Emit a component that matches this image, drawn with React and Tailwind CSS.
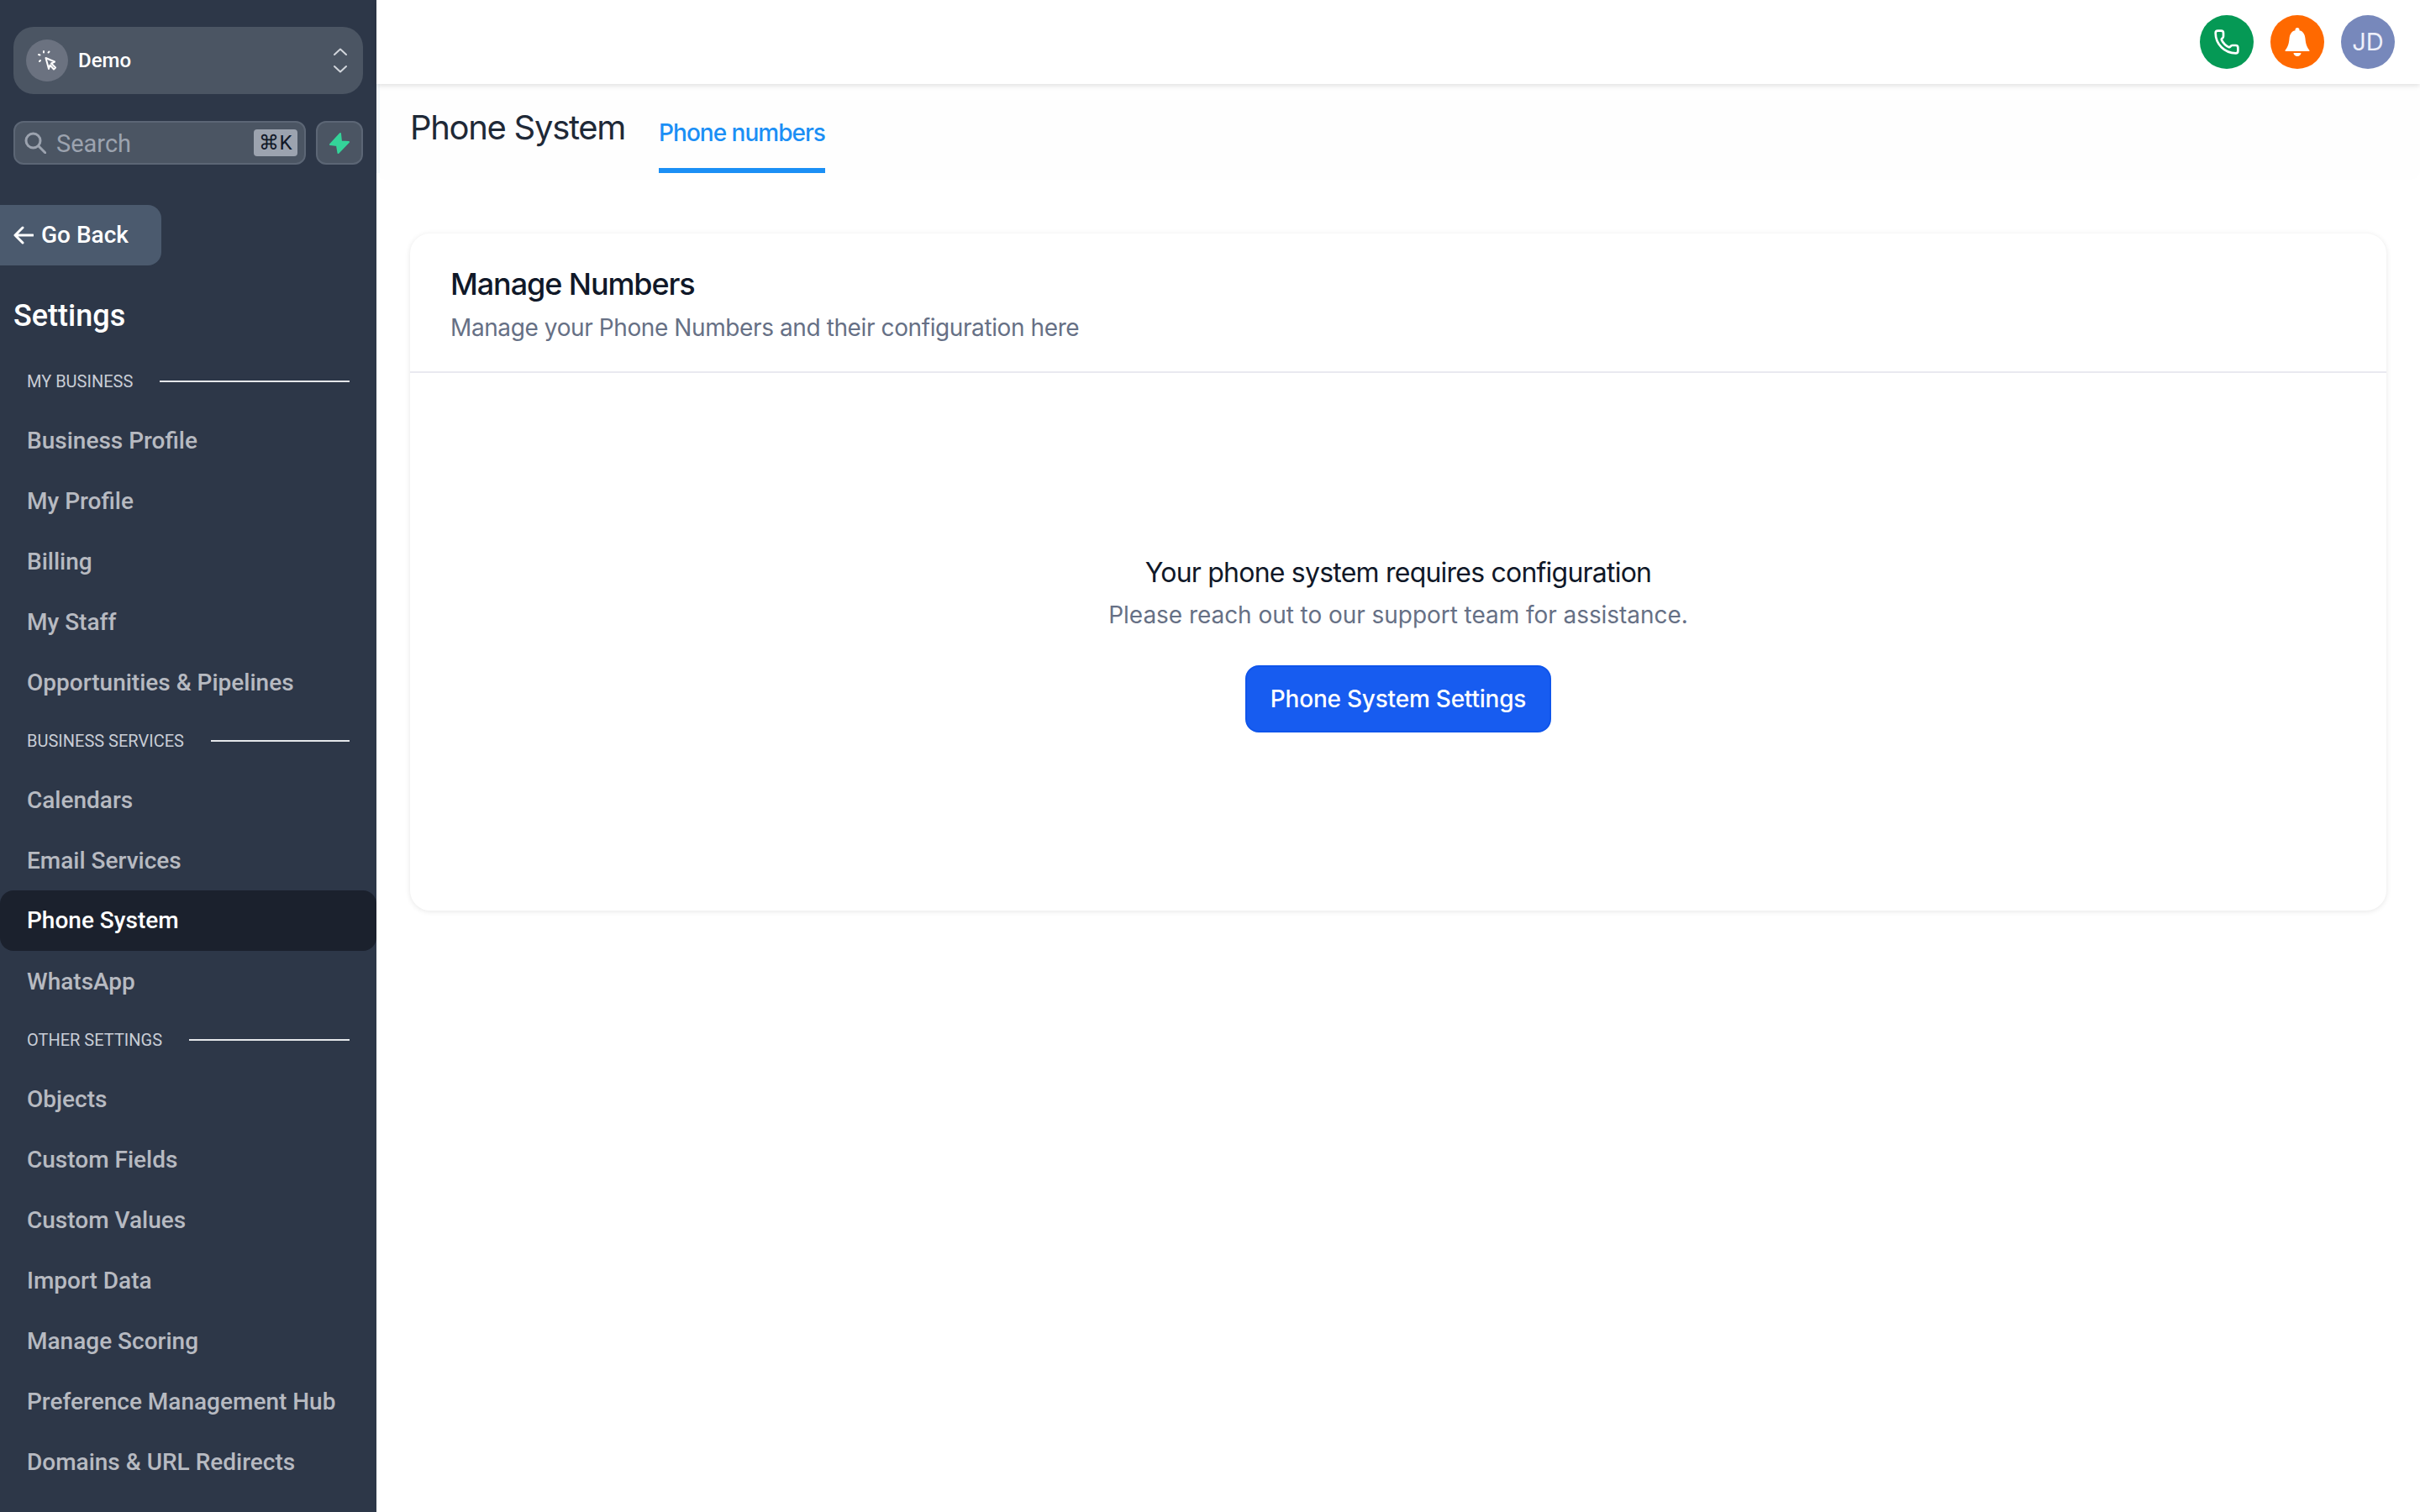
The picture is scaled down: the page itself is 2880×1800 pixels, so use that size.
import React from "react";
import { Phone } from "lucide-react";

const roboto = "font-['Roboto',sans-serif]";

function Row({ label, active }) {
  return (
    <div className={`h-[72px] flex items-center pl-8 text-[28px] font-medium rounded-2xl ${active ? "bg-[#1b212d] text-white" : "text-[#b7bac1]"}`}>
      <span className={active ? "" : "pt-[1px]"}>{label}</span>
    </div>
  );
}

function Group({ label }) {
  return (
    <div className="h-[68px] flex items-center pl-8 pr-8 gap-8">
      <span className="text-[20px] text-[#c8cdd6] whitespace-nowrap pb-[1px]">{label}</span>
      <div className="flex-1 h-[2px] bg-[#e5e7eb]" />
    </div>
  );
}

function Sidebar() {
  return (
    <aside className={`w-[448px] shrink-0 bg-[#2d3748] h-full overflow-hidden ${roboto}`}>
      <div className="mx-4 mt-8 h-20 rounded-3xl bg-[#4b5563] flex items-center pl-[15px] pr-[19px]">
        <div className="w-[50px] h-[50px] rounded-full bg-[#6b7280] flex items-center justify-center">
          <svg viewBox="0 0 26 26" className="w-[26px] h-[26px] ml-[2px]" fill="none" stroke="white" strokeWidth="2" strokeLinecap="round" strokeLinejoin="round">
            <path d="M10.5 10 21 14.5 17 16.5 22 21.5 20 23.5 15.5 18.5 14 23Z" />
            <path d="M8 2V3.5M2 6 3.5 6.5M13.5 3.5 14.5 2.5M3 14 4 13" />
          </svg>
        </div>
        <span className="ml-3 text-[24px] font-medium text-white flex-1">Demo</span>
        <svg viewBox="0 0 16 30" className="w-4 h-[30px]" fill="none" stroke="#d1d5db" strokeWidth="2" strokeLinecap="round" strokeLinejoin="round">
          <path d="M1 8 8 1.5 15 8" />
          <path d="M1 22 8 28.5 15 22" />
        </svg>
      </div>
      <div className="mx-4 mt-8 flex gap-3 h-[52px]">
        <div className="flex-1 rounded-xl bg-[#4b5563] border-2 border-[#5c6675] flex items-center pl-[11px] pr-2">
          <svg viewBox="0 0 26 26" className="w-[26px] h-[26px]" fill="none" stroke="#9ca3af" strokeWidth="3" strokeLinecap="round">
            <circle cx="10.5" cy="10.5" r="8.5" />
            <path d="M17 17 25 25" />
          </svg>
          <span className="ml-3 text-[29px] leading-[48px] pt-[2px] text-[#9ca3af] flex-1">Search</span>
          <span className="w-[52px] h-8 bg-[#9ca3af] rounded flex items-center justify-center text-[24px] text-[#111827]">⌘K</span>
        </div>
        <div className="w-14 rounded-xl bg-[#4b5563] border-2 border-[#5c6675] flex items-center justify-center">
          <svg viewBox="-1 -1 24 25" className="w-6 h-[25px]" fill="#34d399" stroke="#34d399" strokeWidth="2" strokeLinejoin="round">
            <path d="M12 0 0 13 8 14 9.5 23 22 10 13 9.5Z" />
          </svg>
        </div>
      </div>
      <div className="mt-12 w-[192px] h-[72px] bg-[#4b5a6e] rounded-r-2xl flex items-center pl-4 gap-[9px] text-white text-[28px] font-medium">
        <svg viewBox="0 0 24 22" className="w-6 h-[22px]" fill="none" stroke="white" strokeWidth="3" strokeLinecap="round" strokeLinejoin="round">
          <path d="M11 2 2 11 11 20M2 11H23" />
        </svg>
        Go Back
      </div>
      <div className="mt-[34px] pl-4 text-[36px] font-medium text-white leading-[52px]">Settings</div>
      <div className="mt-[18px]">
        <Group label="MY BUSINESS" />
        {["Business Profile", "My Profile", "Billing", "My Staff", "Opportunities & Pipelines"].map((l) => <Row key={l} label={l} />)}
        <Group label="BUSINESS SERVICES" />
        <Row label="Calendars" />
        <Row label="Email Services" />
        <Row label="Phone System" active />
        <Row label="WhatsApp" />
        <Group label="OTHER SETTINGS" />
        {["Objects", "Custom Fields", "Custom Values", "Import Data", "Manage Scoring", "Preference Management Hub", "Domains & URL Redirects"].map((l) => <Row key={l} label={l} />)}
      </div>
    </aside>
  );
}

function Circle({ bg, children }) {
  return <div className={`w-16 h-16 rounded-full flex items-center justify-center text-white ${bg}`}>{children}</div>;
}

export default function App() {
  return (
    <div className="w-[2880px] h-[1800px] flex overflow-hidden bg-white font-['Inter',sans-serif]">
      <Sidebar />
      <main className="flex-1 flex flex-col min-w-0">
        <header className="h-[100px] shrink-0 bg-white shadow-[0_2px_6px_rgba(0,0,0,0.12)] flex items-center justify-end gap-5 pr-[30px] relative">
          <Circle bg="bg-[#059955]"><Phone className="w-8 h-8" strokeWidth={2} /></Circle>
          <Circle bg="bg-[#ff6900]">
            <svg viewBox="0 0 30 34" className="w-[30px] h-[34px]" fill="white">
              <circle cx="15" cy="2.5" r="2.5" />
              <path d="M15 3C8 3 6 8 5.5 13 5 20 3 24 .5 27Q0 28 1.5 28H28.5Q30 28 29.5 27C27 24 25 20 24.5 13 24 8 22 3 15 3Z" />
              <path d="M10.5 30H19.5A4.5 4 0 0 1 10.5 30Z" />
            </svg>
          </Circle>
          <Circle bg="bg-[#7788bb]"><span className="text-[29px] text-[#eef0fa]">JD</span></Circle>
        </header>
        <div className="h-[106px] shrink-0 flex pl-[36px] border-l-4 border-[#f3f8fb] bg-[#fefefe] shadow-[0_8px_12px_rgba(0,0,0,0.008)]">
          <h1 className="text-[40px] tracking-[-1.3px] text-[#1f2937] leading-[60px] mt-[22px] whitespace-nowrap">Phone System</h1>
          <div className="ml-10 h-full flex flex-col">
            <span className="text-[28px] tracking-[-1px] font-medium text-[#1b8ff5] mt-[38px] leading-[40px] flex-1">Phone numbers</span>
            <div className="h-[6px] bg-[#1b8ff5]" />
          </div>
        </div>
        <section className="mx-10 mt-[72px] h-[806px] rounded-3xl bg-white shadow-[0_1px_6px_rgba(0,0,0,0.1)] flex flex-col">
          <div className="h-[166px] shrink-0 border-b-2 border-[#e9e9f0] pl-12 pt-[37px]">
            <div className="text-[36px] tracking-[-1.1px] font-[450] text-[#101828] leading-[46px]">Manage Numbers</div>
            <div className="mt-[9px] text-[28px] text-[#667085] leading-[40px] tracking-[-0.4px]">Manage your Phone Numbers and their configuration here</div>
          </div>
          <div className="flex flex-col items-center flex-1 pt-[213px]">
            <div className="text-[32px] tracking-[-0.78px] text-[#101828] leading-[50px]">Your phone system requires configuration</div>
            <div className="text-[28px] text-[#667085] leading-[40px] mt-[5px] tracking-[-0.05px]">Please reach out to our support team for assistance.</div>
            <button className="mt-[40px] w-[364px] h-20 rounded-2xl bg-[#175cf0] border-2 border-[#0f55eb] text-white text-[28px] tracking-[-0.22px] font-medium">Phone System Settings</button>
          </div>
        </section>
      </main>
    </div>
  );
}
